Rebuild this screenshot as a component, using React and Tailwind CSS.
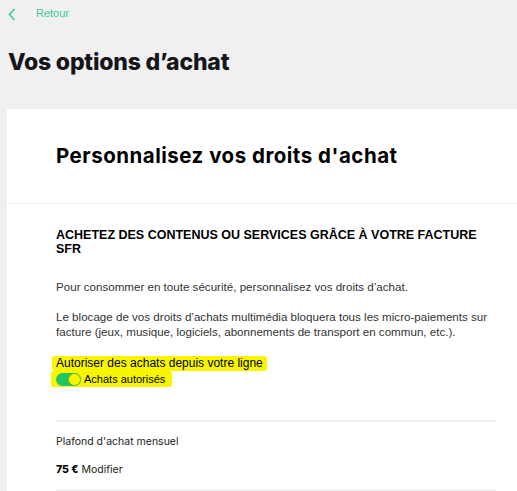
import React, { useState } from 'react';

const sans = { fontFamily: '"Liberation Sans", Arial, sans-serif' };
const geo = { fontFamily: 'Inter, "Open Sans", sans-serif' };

const App = () => {
  const [allowed, setAllowed] = useState(true);

  return (
    <div className="w-[517px] h-[491px] overflow-hidden bg-[#f0f0f0]">
      {/* Back link */}
      <div className="flex items-center h-[27px] pl-[8px]" style={sans}>
        <svg width="8" height="13" viewBox="0 0 8 13" className="mt-[1px]">
          <path d="M6.5 1 L1.5 6.5 L6.5 12" fill="none" stroke="#3cc99a" strokeWidth="1.6" />
        </svg>
        <span className="ml-[20px] text-[11px] text-[#3cc99a]">Retour</span>
      </div>

      {/* Page title */}
      <h1 className="pl-[8px] pt-[18px] h-[82px] text-[23px] font-extrabold tracking-[-0.2px] text-[#16161a]" style={geo}>
        Vos options d’achat
      </h1>

      {/* Card */}
      <div className="ml-[7px] bg-white">
        <div className="h-[95px] flex items-center pl-[49px] border-b border-[#efefef]">
          <h2 className="text-[20.5px] font-bold tracking-[0.5px] text-black" style={geo}>
            Personnalisez vos droits d'achat
          </h2>
        </div>

        <div className="pl-[49px] pr-[21px]" style={sans}>
          <h3 className="pt-[24px] text-[12.5px] leading-[14px] font-bold text-black">
            ACHETEZ DES CONTENUS OU SERVICES GRÂCE À VOTRE FACTURE SFR
          </h3>

          <p className="mt-[23px] text-[11.6px] leading-[15px] text-[#333]">
            Pour consommer en toute sécurité, personnalisez vos droits d’achat.
          </p>

          <p className="mt-[15px] text-[11.6px] leading-[15px] text-[#333]">
            Le blocage de vos droits d’achats multimédia bloquera tous les micro-paiements sur facture (jeux, musique, logiciels, abonnements de transport en commun, etc.).
          </p>

          {/* Highlighted permission toggle */}
          <div className="mt-[17px] flex">
            <span className="-ml-[4px] px-[4px] bg-[#f7f500] rounded-[3px] text-[12px] leading-[15px] text-black">
              Autoriser des achats depuis votre ligne
            </span>
          </div>
          <div className="-ml-[5px] flex w-fit items-center gap-[3px] pl-[5px] pr-[7px] h-[16px] bg-[#f7f500] rounded-[3px]">
            <button
              type="button"
              onClick={() => setAllowed(!allowed)}
              className={`relative w-[25px] h-[13px] rounded-full ${allowed ? 'bg-[#22c55e]' : 'bg-gray-300'}`}
            >
              <span
                className={`absolute top-[0px] w-[13px] h-[13px] rounded-full bg-[#f7f500] border border-[#5fbf3a] ${allowed ? 'right-0' : 'left-0'}`}
              />
            </button>
            <span className="text-[11px] leading-[14px] text-black">Achats autorisés</span>
          </div>

          <div className="mt-[33px] border-t-2 border-[#f0f0f0] w-[440px]" />

          <p className="mt-[13px] text-[10.5px] leading-[14px] text-[#222]" style={geo}>
            Plafond d'achat mensuel
          </p>
          <p className="mt-[14px] text-[10.5px] leading-[14px] text-[#222]" style={geo}>
            <span className="font-extrabold text-black">75 €</span> Modifier
          </p>

          <div className="mt-[12px] border-t-2 border-[#f0f0f0] w-[440px]" />
        </div>
      </div>
    </div>
  );
};

export default App;
